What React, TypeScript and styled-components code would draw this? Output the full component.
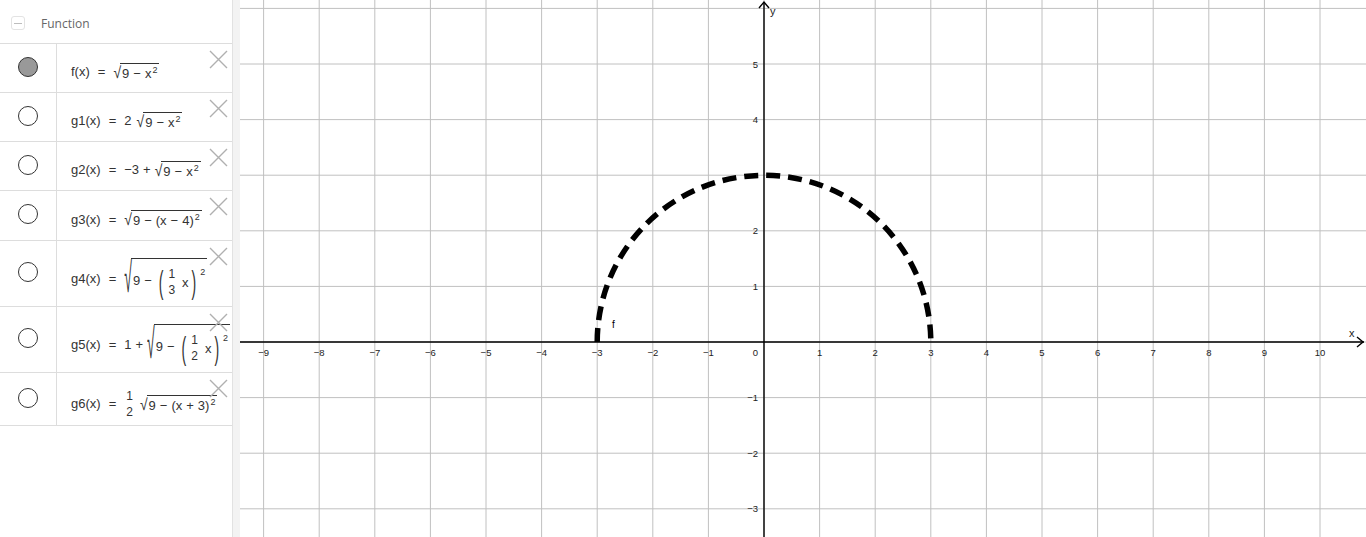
import React from 'react';
import styled, { createGlobalStyle } from 'styled-components';

const GlobalStyle = createGlobalStyle`
  html, body {
    margin: 0;
    padding: 0;
    height: 100%;
    overflow: hidden;
    background: #fff;
  }
  #root {
    height: 100%;
  }
`;

// ---------- layout ----------
const Layout = styled.div`
  display: flex;
  width: 1366px;
  height: 537px;
  font-family: "Liberation Sans", Arial, sans-serif;
`;

const Algebra = styled.aside`
  width: 233px;
  flex: none;
  box-sizing: border-box;
  background: #fff;
  border-right: 1px solid #e2e2e2;
`;

const Splitter = styled.div`
  width: 7px;
  flex: none;
  background: #f3f3f3;
`;

const Canvas = styled.main`
  flex: 1;
  overflow: hidden;
  background: #fff;
`;

// ---------- algebra view ----------
const Header = styled.div`
  height: 44px;
  box-sizing: border-box;
  border-bottom: 1px solid #ddd;
  display: flex;
  align-items: center;
  gap: 16px;
  padding: 3px 0 0 11px;
`;

const Collapse = styled.span`
  width: 14px;
  height: 14px;
  box-sizing: border-box;
  border: 1px solid #e3e3e3;
  border-radius: 3px;
  display: flex;
  align-items: center;
  justify-content: center;
  &::after {
    content: '';
    width: 8px;
    height: 1px;
    background: #bdbdbd;
  }
`;

const GroupTitle = styled.span`
  font: 12px "Open Sans", "Liberation Sans", sans-serif;
  color: #666;
`;

const Row = styled.div<{ $h: number }>`
  position: relative;
  display: flex;
  height: ${(p) => p.$h}px;
  box-sizing: border-box;
  border-bottom: 1px solid #ddd;
`;

const MarbleCell = styled.div`
  width: 57px;
  flex: none;
  box-sizing: border-box;
  border-right: 1px solid #ddd;
  display: flex;
  align-items: center;
  justify-content: center;
  padding-bottom: 3px;
`;

const Marble = styled.span<{ $on?: boolean }>`
  width: 20px;
  height: 20px;
  box-sizing: border-box;
  border-radius: 50%;
  border: 1.5px solid #333;
  background: ${(p) => (p.$on ? '#999' : '#fff')};
`;

const Cell = styled.div<{ $shift: number }>`
  flex: 1;
  display: flex;
  align-items: center;
  padding: ${(p) => p.$shift}px 0 0 14px;
  min-width: 0;
`;

const DeleteBtn = styled.button`
  position: absolute;
  top: 5px;
  right: 4px;
  width: 20px;
  height: 20px;
  padding: 0;
  border: 0;
  background: transparent;
  display: flex;
  align-items: center;
  justify-content: center;
  svg {
    display: block;
  }
`;

// ---------- math ----------
const Formula = styled.div`
  display: inline-flex;
  align-items: center;
  font-size: 13px;
  line-height: 15px;
  color: #333;
  white-space: nowrap;
`;

const Eq = styled.span`
  margin: 0 8px;
`;

const Op = styled.span`
  margin: 0 4px;
`;

const Gap = styled.span`
  display: inline-block;
  width: 5px;
`;

const Root = styled.span`
  display: inline-flex;
  align-items: stretch;
`;

const Surd = styled.span<{ $scale: number }>`
  display: inline-block;
  align-self: flex-end;
  font-size: 14px;
  line-height: 14px;
  height: 14px;
  margin-bottom: 1px;
  transform: scaleY(${(p) => p.$scale});
  transform-origin: 50% 100%;
`;

const Radicand = styled.span`
  display: inline-flex;
  align-items: center;
  border-top: 1px solid #333;
  padding: 2px 2px 0 2px;
  margin-left: -1px;
`;

const Sup = styled.span`
  align-self: flex-start;
  font-size: 9px;
  line-height: 9px;
  margin-left: 1px;
`;

const Group = styled.span`
  display: inline-flex;
  align-items: center;
  padding: 7px 0 3px;
`;

const BigParen = styled.span`
  display: inline-block;
  font-size: 14px;
  line-height: 14px;
  transform: scaleY(2.3);
  margin: 0 3px;
`;

const Frac = styled.span`
  display: inline-flex;
  flex-direction: column;
  align-items: center;
  font-size: 12px;
  line-height: 12px;
  margin: 0 2px;
  span + span {
    padding-top: 4px;
  }
`;

const Sq: React.FC<{ children: React.ReactNode; tall?: boolean }> = ({ children, tall }) => (
  <Root>
    <Surd $scale={tall ? 3.0 : 1.15}>√</Surd>
    <Radicand>{children}</Radicand>
  </Root>
);

const Half: React.FC<{ d: string }> = ({ d }) => (
  <Frac>
    <span>1</span>
    <span>{d}</span>
  </Frac>
);

const CloseIcon = () => (
  <svg width="19" height="19" viewBox="0 0 19 19">
    <path d="M1 1 L18 18 M18 1 L1 18" stroke="#b0b0b0" strokeWidth="1.4" fill="none" />
  </svg>
);

interface Item {
  h: number;
  shift: number;
  on?: boolean;
  body: React.ReactNode;
}

const items: Item[] = [
  {
    h: 49,
    shift: 7,
    on: true,
    body: (
      <>
        f(x)<Eq>=</Eq>
        <Sq>9<Op>−</Op>x<Sup>2</Sup></Sq>
      </>
    ),
  },
  {
    h: 49,
    shift: 7,
    body: (
      <>
        g1(x)<Eq>=</Eq>2<Gap />
        <Sq>9<Op>−</Op>x<Sup>2</Sup></Sq>
      </>
    ),
  },
  {
    h: 49,
    shift: 7,
    body: (
      <>
        g2(x)<Eq>=</Eq>−3<Op>+</Op>
        <Sq>9<Op>−</Op>x<Sup>2</Sup></Sq>
      </>
    ),
  },
  {
    h: 50,
    shift: 7,
    body: (
      <>
        g3(x)<Eq>=</Eq>
        <Sq>9<Op>−</Op>(x<Op>−</Op>4)<Sup>2</Sup></Sq>
      </>
    ),
  },
  {
    h: 66,
    shift: 10,
    body: (
      <>
        g4(x)<Eq>=</Eq>
        <Sq tall>
          9<Op>−</Op>
          <Group>
            <BigParen>(</BigParen>
            <Half d="3" />
            <Gap />x<BigParen>)</BigParen>
            <Sup>2</Sup>
          </Group>
        </Sq>
      </>
    ),
  },
  {
    h: 66,
    shift: 10,
    body: (
      <>
        g5(x)<Eq>=</Eq>1<Op>+</Op>
        <Sq tall>
          9<Op>−</Op>
          <Group>
            <BigParen>(</BigParen>
            <Half d="2" />
            <Gap />x<BigParen>)</BigParen>
            <Sup>2</Sup>
          </Group>
        </Sq>
      </>
    ),
  },
  {
    h: 53,
    shift: 9,
    body: (
      <>
        g6(x)<Eq>=</Eq>
        <Half d="2" />
        <Gap />
        <Sq>9<Op>−</Op>(x<Op>+</Op>3)<Sup>2</Sup></Sq>
      </>
    ),
  },
];

// ---------- graphics view ----------
const Plot = styled.svg`
  display: block;
  width: 100%;
  height: 100%;
  font-family: "Liberation Sans", Arial, sans-serif;
`;

const W = 1126;
const H = 537;
const S = 55.6;
const OX = 524;
const OY = 342;

const range = (a: number, b: number) => Array.from({ length: b - a + 1 }, (_, i) => a + i);
const num = (k: number) => (k < 0 ? `−${-k}` : `${k}`);

const Graph = () => {
  const xk = range(-9, 10);
  const yk = range(-3, 6);
  return (
    <Plot viewBox={`0 0 ${W} ${H}`}>
      <g stroke="#c0c0c0" strokeWidth="1">
        {xk.map((k) => (
          <line key={`gx${k}`} x1={OX + k * S} y1={0} x2={OX + k * S} y2={H} />
        ))}
        {yk.map((k) => (
          <line key={`gy${k}`} x1={0} y1={OY - k * S} x2={W} y2={OY - k * S} />
        ))}
      </g>

      <g stroke="#000" strokeWidth="1.4" fill="none">
        <line x1={0} y1={OY} x2={W - 2} y2={OY} />
        <path d={`M${W - 9} ${OY - 5} L${W - 3} ${OY} L${W - 9} ${OY + 5}`} />
        <line x1={OX} y1={H} x2={OX} y2={2} />
        <path d={`M${OX - 5} 8 L${OX} 2 L${OX + 5} 8`} />
      </g>

      <g fontSize="9.5" fill="#222">
        {xk
          .filter((k) => k !== 0)
          .map((k) => (
            <text key={`lx${k}`} x={OX + k * S} y={OY + 14} textAnchor="middle">
              {num(k)}
            </text>
          ))}
        <text x={OX - 6} y={OY + 14} textAnchor="end">0</text>
        {yk
          .filter((k) => k !== 0 && k !== 3 && k !== 6)
          .map((k) => (
            <text key={`ly${k}`} x={OX - 6} y={OY - k * S + 3.5} textAnchor="end">
              {num(k)}
            </text>
          ))}
      </g>

      <g fontSize="11" fill="#222">
        <text x={OX + 6} y={15}>y</text>
        <text x={W - 17} y={OY - 5}>x</text>
      </g>

      <path
        d={`M${OX - 3 * S} ${OY} A ${3 * S} ${3 * S} 0 0 1 ${OX + 3 * S} ${OY}`}
        stroke="#000"
        strokeWidth="5.5"
        strokeDasharray="14 8"
        fill="none"
      />
      <text x={372} y={328} fontSize="10" fill="#000">f</text>
    </Plot>
  );
};

export default function App() {
  return (
    <>
      <GlobalStyle />
      <Layout>
        <Algebra>
          <Header>
            <Collapse />
            <GroupTitle>Function</GroupTitle>
          </Header>
          {items.map((it, i) => (
            <Row key={i} $h={it.h}>
              <MarbleCell>
                <Marble $on={it.on} />
              </MarbleCell>
              <Cell $shift={it.shift}>
                <Formula>{it.body}</Formula>
              </Cell>
              <DeleteBtn aria-label="Delete">
                <CloseIcon />
              </DeleteBtn>
            </Row>
          ))}
        </Algebra>
        <Splitter />
        <Canvas>
          <Graph />
        </Canvas>
      </Layout>
    </>
  );
}
